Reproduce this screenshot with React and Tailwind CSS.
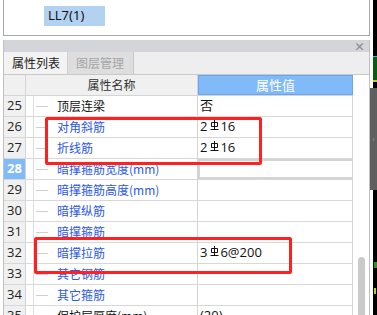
const ROWS = [
  { n: 25, name: '顶层连梁', value: '否', blue: false },
  { n: 26, name: '对角斜筋', value: ['2', '16'], blue: true },
  { n: 27, name: '折线筋', value: ['2', '16'], blue: true },
  { n: 28, name: '暗撑箍筋宽度(mm)', value: '', blue: true, active: true },
  { n: 29, name: '暗撑箍筋高度(mm)', value: '', blue: true },
  { n: 30, name: '暗撑纵筋', value: '', blue: true },
  { n: 31, name: '暗撑箍筋', value: '', blue: true },
  { n: 32, name: '暗撑拉筋', value: ['3', '6@200'], blue: true },
  { n: 33, name: '其它钢筋', value: '', blue: true },
  { n: 34, name: '其它箍筋', value: '', blue: true },
  { n: 35, name: '保护层厚度(mm)', value: '(20)', blue: false },
]

function Rebar() {
  return (
    <svg width="9" height="10" viewBox="0 0 9 10" className="ml-[3px] mr-[1px] -mt-[5px] shrink-0" fill="none" stroke="#111" strokeWidth="1">
      <path d="M4.5 0V9.5" />
      <path d="M1.5 2.5h6v4h-6z" />
      <path d="M0.5 9.5h8" />
    </svg>
  )
}

function Value({ v }) {
  if (Array.isArray(v)) {
    return (
      <span className="flex items-center">
        {v[0]}
        <Rebar />
        {v[1]}
      </span>
    )
  }
  return <span>{v}</span>
}

export default function App() {
  return (
    <div className="w-[377px] h-[315px] overflow-hidden bg-white relative flex text-[12px] text-[#111]" style={{ fontFamily: '"Noto Sans CJK SC", "Noto Sans", sans-serif' }}>
      <div className="w-[370px] shrink-0 flex flex-col">
        {/* object list */}
        <div className="ml-[3px] w-[367px] h-[36px] shrink-0 border-l border-r border-b border-[#a8a8a8] pt-[6px] pl-[40px]">
          <div className="w-[61px] h-[20px] bg-[#b3d2f2] pl-[4px] flex items-center text-[13px]" style={{ fontFamily: '"Noto Sans", sans-serif' }}>LL7(1)</div>
        </div>
        <div className="h-[4px] shrink-0" />

        {/* property panel */}
        <div className="ml-[3px] w-[367px] flex-1 flex flex-col border-l border-r border-[#c0c0c0]">
          <div className="h-[12px] shrink-0 bg-[#d3d5da] flex items-center justify-end pr-[4px]">
            <span className="text-[11px] leading-none text-[#8a8a8a] font-bold">×</span>
          </div>
          <div className="h-[23px] shrink-0 bg-[#eeeeee] border-b border-[#c8c8c8] flex">
            <div className="w-[64px] flex items-center pl-[8px] text-[12px] text-[#222] bg-[#f3f3f3] border-r border-[#d0d0d0]">属性列表</div>
            <div className="w-[66px] flex items-center pl-[8px] text-[12px] text-[#a6a6a6] bg-[#dedede] border-r border-[#c8c8c8]">图层管理</div>
          </div>

          <div className="flex flex-1 min-h-0">
            <div className="w-[349px] shrink-0 flex flex-col">
              <div className="h-[21px] shrink-0 flex border-b border-[#d4d4d4]">
                <div className="w-[22px] bg-[#f0f0f0] border-r border-[#d4d4d4]" />
                <div className="w-[172px] bg-[#f0f0f0] border-r border-[#d4d4d4] flex items-center justify-center text-[#333]">属性名称</div>
                <div className="w-[155px] bg-[#80baf8] border border-[#6aa6ea] flex items-center justify-center text-white text-[13px]">属性值</div>
              </div>
              {ROWS.map((r) => (
                <div key={r.n} className="h-[21px] shrink-0 flex border-b border-[#d8d8d8]">
                  <div className={`w-[22px] shrink-0 border-r border-[#d4d4d4] flex items-center justify-center text-[13px] ${r.active ? 'bg-[#80baf8] text-white font-bold' : 'bg-[#f0f0f0] text-[#222]'}`} style={{ fontFamily: '"Open Sans", sans-serif' }}>
                    {r.n}
                  </div>
                  <div className="w-[172px] shrink-0 border-r border-[#d4d4d4] flex items-center">
                    <div className="ml-[7px] w-px h-full bg-[#dcdcdc]" />
                    <div className="ml-[2px] w-[12px] h-px bg-[#d0d0d0]" />
                    <span className={`ml-[9px] whitespace-nowrap ${r.blue ? 'text-[#2b57e8]' : 'text-[#111]'}`}>{r.name}</span>
                  </div>
                  <div className={`w-[155px] shrink-0 border-r border-[#d4d4d4] flex items-center pl-[2px] text-[13px] ${r.active ? 'border-2 border-[#808080]' : ''}`} style={{ fontFamily: '"Open Sans", "Noto Sans CJK SC", sans-serif' }}>
                    <Value v={r.value} />
                  </div>
                </div>
              ))}
            </div>
            <div className="flex-1 pt-[182px] pl-[5px]">
              <div className="w-[7px] h-[80px] rounded-full bg-[#cacaca]" />
            </div>
          </div>
        </div>
      </div>

      {/* neighbouring window edge */}
      <div className="w-[7px] shrink-0 flex flex-col">
        <div className="h-[56px] flex"><div className="w-[3px] bg-white" /><div className="flex-1 bg-black" /></div>
        <div className="h-[1px] flex"><div className="w-[3px] bg-white" /><div className="flex-1 bg-[#1fc4c4]" /></div>
        <div className="h-[23px] flex"><div className="w-[3px] bg-white" /><div className="flex-1 bg-[#0b5a12]" /></div>
        <div className="h-[2px] flex"><div className="w-[3px] bg-white" /><div className="flex-1 bg-[#c9c81a]" /></div>
        <div className="h-[6px] flex"><div className="w-[3px] bg-white" /><div className="flex-1 bg-black" /></div>
        <div className="h-[102px] bg-[#5f5f5f] flex items-center justify-center text-[8px] text-[#9a9a9a]">‹</div>
        <div className="flex-1 flex"><div className="w-[3px] bg-white" /><div className="flex-1 bg-black flex flex-col items-center pt-[72px] gap-[20px]"><div className="w-[3px] h-[6px] bg-[#2f8f2f]" /><div className="w-[2px] h-[6px] bg-[#c9c81a]" /></div></div>
      </div>

      {/* red annotation boxes */}
      <div className="absolute left-[45px] top-[117px] w-[217px] h-[48px] border-[3px] border-[#ff2020] rounded-[2px]" />
      <div className="absolute left-[34px] top-[237px] w-[258px] h-[37px] border-[3px] border-[#ff2020] rounded-[2px]" />
    </div>
  )
}
